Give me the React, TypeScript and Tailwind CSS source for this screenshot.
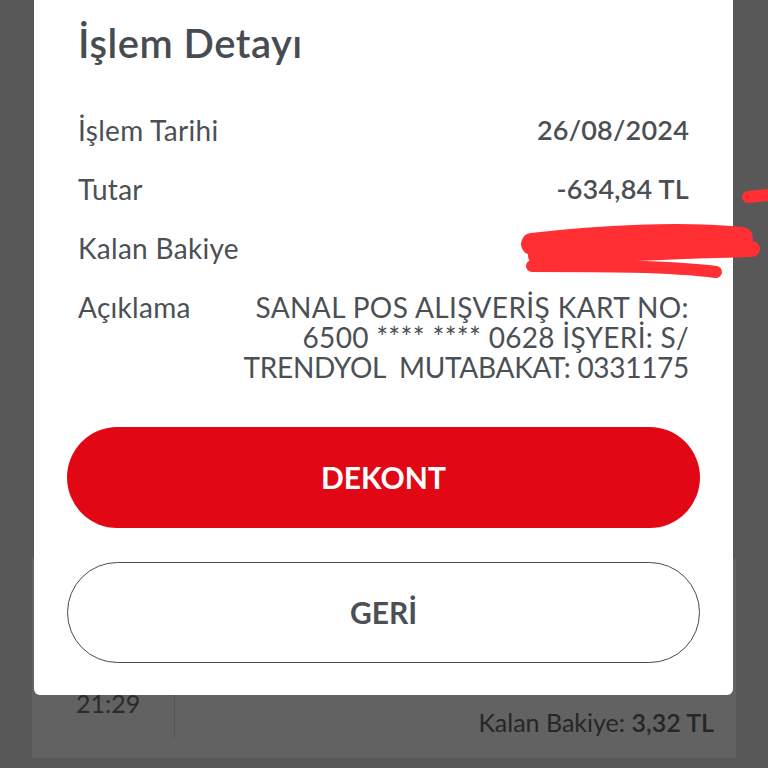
import React from "react";

const font = { fontFamily: '"Lato", "Open Sans", sans-serif' };

function Row({ label, value }: { label: string; value: string }) {
  return (
    <div className="flex items-start justify-between leading-[30px]">
      <span className="text-[28px] tracking-[0.3px] text-[#4b5055]">{label}</span>
      <span className="text-[27px] font-semibold tracking-[0.2px] text-[#4b5055]">{value}</span>
    </div>
  );
}

export default function App() {
  return (
    <div className="relative w-[768px] h-[768px] overflow-hidden bg-[#585858]" style={font}>
      {/* background page */}
      <div className="flex h-full flex-col justify-end px-[32px] pb-[10px]">
        <div className="flex h-[200px] items-stretch bg-[#626262] pl-[44px] pr-[22px]">
          <div className="flex w-[98px] flex-col justify-end pb-[41px]">
            <span className="text-[25px] leading-[28px] text-[#2b2b2b]">21:29</span>
          </div>
          <div className="mt-[134px] mb-[20px] w-px bg-[#555]" />
          <div className="flex flex-1 items-end justify-end pb-[22px]">
            <span className="text-[25px] leading-[28px] text-[#262626]">
              Kalan Bakiye: <span className="font-semibold">3,32 TL</span>
            </span>
          </div>
        </div>
      </div>

      {/* modal */}
      <div className="absolute left-[34px] top-0 flex w-[699px] flex-col rounded-b-[6px] bg-white pb-[32px]">
        <div className="px-[44px] pt-[18px]">
          <h1 className="text-[40px] font-semibold leading-[50px] tracking-[0.5px] text-[#474c51]">İşlem Detayı</h1>
        </div>
        <div className="mt-[47px] flex flex-col gap-[29px] px-[44px]">
          <Row label="İşlem Tarihi" value="26/08/2024" />
          <Row label="Tutar" value="-634,84 TL" />
          <Row label="Kalan Bakiye" value="" />
          <div className="flex items-start justify-between leading-[30px]">
            <span className="text-[28px] tracking-[0.3px] text-[#4b5055]">Açıklama</span>
            <div className="flex flex-col items-end text-right text-[28px] leading-[30px] text-[#4b5055]">
              <span className="tracking-[0.4px]">SANAL POS ALIŞVERİŞ KART NO:</span>
              <span className="tracking-[0.3px]">6500 **** **** 0628 İŞYERİ: S/</span>
              <span className="whitespace-pre tracking-[-0.3px]">TRENDYOL  MUTABAKAT: 0331175</span>
            </div>
          </div>
        </div>
        <div className="mt-[45px] flex flex-col gap-[34px] px-[33px]">
          <button className="flex h-[101px] items-center justify-center rounded-full bg-[#e20714] text-[30px] font-bold text-white">
            DEKONT
          </button>
          <button className="flex h-[101px] items-center justify-center rounded-full border-[1.5px] border-[#4a4a4a] bg-white text-[30px] font-bold text-[#4b5055]">
            GERİ
          </button>
        </div>
      </div>

      {/* red scribble */}
      <svg className="pointer-events-none absolute left-0 top-0" width="768" height="768">
        <g stroke="#ff2f33" strokeLinecap="round" fill="none">
          <path d="M532 244 C600 236 680 232 742 238" strokeWidth="22" />
          <path d="M536 256 C620 254 700 250 752 249" strokeWidth="16" />
          <path d="M532 266 C600 266 670 266 716 272" strokeWidth="12" />
          <path d="M748 197 L768 195" strokeWidth="12" />
        </g>
      </svg>
    </div>
  );
}
